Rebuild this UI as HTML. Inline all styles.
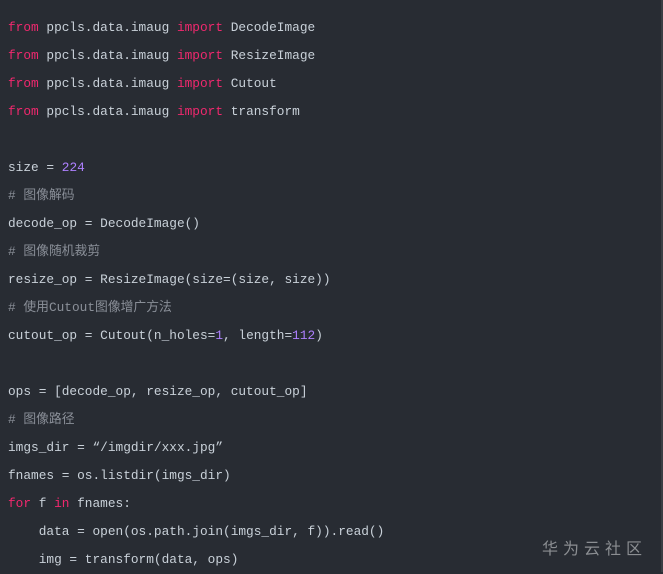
<!DOCTYPE html>
<html><head><meta charset="utf-8"><style>
html,body{margin:0;padding:0;}
body{width:663px;height:572px;background:#282c33;overflow:hidden;position:relative;}
pre{margin:0;position:absolute;left:8px;top:14px;font-family:"Liberation Mono","Noto Sans CJK SC",monospace;font-size:12.8px;line-height:28px;color:#c9d1d9;}
.k{color:#f0286e}.n{color:#ae81ff}.c{color:#8a8f98;font-family:"Liberation Mono","Noto Sans CJK SC",monospace}
.wm{position:absolute;left:542px;top:535px;font-family:"Noto Sans CJK SC",sans-serif;font-size:16px;letter-spacing:5px;color:#8b8e92;}
.edge{position:absolute;right:0;top:0;width:2px;height:572px;background:#3a3e44;}
</style></head><body>
<pre><span class="k">from</span> ppcls.data.imaug <span class="k">import</span> DecodeImage
<span class="k">from</span> ppcls.data.imaug <span class="k">import</span> ResizeImage
<span class="k">from</span> ppcls.data.imaug <span class="k">import</span> Cutout
<span class="k">from</span> ppcls.data.imaug <span class="k">import</span> transform

size = <span class="n">224</span>
<span class="c"># 图像解码</span>
decode_op = DecodeImage()
<span class="c"># 图像随机裁剪</span>
resize_op = ResizeImage(size=(size, size))
<span class="c"># 使用Cutout图像增广方法</span>
cutout_op = Cutout(n_holes=<span class="n">1</span>, length=<span class="n">112</span>)

ops = [decode_op, resize_op, cutout_op]
<span class="c"># 图像路径</span>
imgs_dir = “/imgdir/xxx.jpg”
fnames = os.listdir(imgs_dir)
<span class="k">for</span> f <span class="k">in</span> fnames:
    data = open(os.path.join(imgs_dir, f)).read()
    img = transform(data, ops)</pre>
<div class="wm">华为云社区</div>
<div class="edge"></div>
</body></html>
